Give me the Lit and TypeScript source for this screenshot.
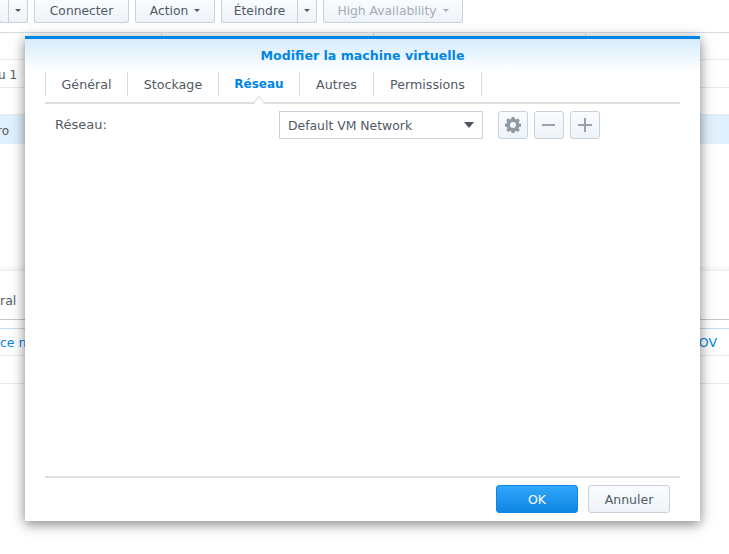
import { LitElement, html, css } from "lit";
import { customElement } from "lit/decorators.js";

const caret = html`<span class="caret"></span>`;

@customElement("app-root")
export class AppRoot extends LitElement {
  static styles = css`
    :host { display: block; position: relative; width: 729px; height: 554px; overflow: hidden; background: #fff;
      font-family: "DejaVu Sans", Verdana, sans-serif; font-size: 12px; color: #505a64; }
    .toolbar { display: flex; height: 24px; align-items: flex-end; gap: 6px; margin-top: -1px; margin-bottom: 9px; }
    .group { display: flex; }
    .tb { box-sizing: border-box; height: 24px; display: flex; align-items: center; justify-content: center; gap: 6px; font-size: 12.3px;
      border: 1px solid #c8d1dc; border-top: none; border-radius: 0 0 3px 3px; background: linear-gradient(#fafcfe, #eef3f8); color: #505a64; }
    .group .tb:first-child { border-radius: 0 0 0 3px; border-right: none; }
    .group .tb:last-child { border-radius: 0 0 3px 0; }
    .caret { width: 0; height: 0; border: 3px solid transparent; border-top: 3px solid #505a64; border-bottom: none; }
    .off { color: #a6adb6; }
    .off .caret { border-top-color: #a6adb6; }
    .lead { margin-left: -1px; }
    .w00 { width: 9px; }
    .w1 { width: 95px; }
    .w2 { width: 80px; }
    .w3 { width: 76px; }
    .w4 { width: 20px; }
    .w5 { width: 140px; }
    .thead { height: 26px; border-top: 1px solid #d5dce5; border-bottom: 1px solid #e6e9ee; display: grid; grid-template-columns: 162px 212px 212px 1fr; }
    .thead span { border-right: 1px solid #d5dce5; }
    .thead span:last-child { border-right: none; }
    .row { box-sizing: border-box; height: 28px; border-bottom: 1px solid #e6e9ee; display: flex; align-items: center; padding-top: 2px; }
    .row span { margin-left: -2px; }
    .row.short { height: 27px; }
    .row.sel { height: 29px; background: #e0f1fd; border-bottom: none; padding-top: 2px; }
    .row.sel span { margin-left: -3px; }
    .spacer { height: 127px; background: linear-gradient(#fff 121px, #f1f1f1); }
    .ltabs { box-sizing: border-box; height: 49px; border-bottom: 1px solid #c6c6c6; padding-top: 20px; line-height: 20px; font-size: 12.5px; }
    .lhead { height: 8px; border-bottom: 1px solid #c9d9e8; }
    .lrow { box-sizing: border-box; height: 27px; border-bottom: 1px solid #e6e9ee; color: #0086e5; font-size: 12.5px; display: flex; align-items: center; justify-content: space-between; padding: 1px 12px 0 0; }
    .lrow.blank { height: 28px; }

    .modal { position: absolute; left: 25px; top: 36px; width: 675px; height: 485px; box-sizing: border-box; background: #fff;
      border-top: 3px solid #0086e5; box-shadow: 0 3px 12px rgba(0, 0, 0, 0.5); display: flex; flex-direction: column; padding: 0 20px 8px 20px; }
    .grad { position: absolute; left: 0; right: 0; top: 0; height: 32px; background: linear-gradient(#d6ebfb, #fff); }
    .title { position: relative; height: 33px; line-height: 33px; text-align: center; font-weight: bold; font-size: 12.6px; color: #0086e5; }
    .tabs { position: relative; display: flex; height: 30px; border-bottom: 2px solid #dfdfdf; }
    .tab { box-sizing: border-box; height: 24px; line-height: 25px; text-align: center; border-right: 1px solid #d7dde4; font-size: 12.65px; }
    .tab:first-child { border-left: 1px solid #d7dde4; }
    .tab.on { color: #0086e5; font-weight: bold; font-size: 12px; }
    .t1 { width: 83px; }
    .t2 { width: 91px; }
    .t3 { width: 81px; }
    .t4 { width: 74px; }
    .t5 { width: 108px; }
    .notch { position: absolute; left: 210px; top: 26px; width: 7px; height: 7px; background: #fff; transform: rotate(45deg); border-left: 1px solid #dfdfdf; border-top: 1px solid #dfdfdf; }
    .form { flex: 1; display: flex; align-items: flex-start; padding-top: 7px; }
    .lbl { width: 234px; padding-left: 10px; box-sizing: border-box; line-height: 28px; font-size: 13px; }
    .select { box-sizing: border-box; width: 204px; height: 28px; border: 1px solid #c8d1dc; display: flex; align-items: center; justify-content: space-between; padding: 0 8px; font-size: 12.4px; }
    .select i { width: 0; height: 0; border-left: 5px solid transparent; border-right: 5px solid transparent; border-top: 6px solid #4d5660; }
    .icons { display: flex; gap: 6px; margin-left: 15px; }
    .ib { box-sizing: border-box; width: 30px; height: 28px; border: 1px solid #c8d1dc; border-radius: 3px; background: linear-gradient(#fafcfe, #eef3f8); display: flex; align-items: center; justify-content: center; }
    .foot { border-top: 2px solid #e0e0e0; height: 37px; box-sizing: border-box; padding: 7px 10px 0 0; display: flex; justify-content: flex-end; gap: 10px; }
    .btn { box-sizing: border-box; width: 82px; height: 28px; border-radius: 3px; border: 1px solid #c8d1dc; background: linear-gradient(#fafcfe, #eef3f8); display: flex; align-items: center; justify-content: center; font-size: 12.5px; }
    .btn.ok { background: linear-gradient(#30a6fb, #0f86e4); border-color: #0f86e4; color: #fff; }
  `;

  render() {
    return html`
      <div class="toolbar">
        <div class="group lead"><div class="tb w00"></div><div class="tb w4">${caret}</div></div>
        <div class="tb w1">Connecter</div>
        <div class="tb w2">Action ${caret}</div>
        <div class="group"><div class="tb w3">Éteindre</div><div class="tb w4">${caret}</div></div>
        <div class="tb w5 off">High Availability ${caret}</div>
      </div>
      <div class="thead"><span></span><span></span><span></span><span></span></div>
      <div class="row"><span>u 1</span></div>
      <div class="row short"></div>
      <div class="row sel"><span>ro</span></div>
      <div class="spacer"></div>
      <div class="ltabs">ral</div>
      <div class="lhead"></div>
      <div class="lrow"><span>ce n</span><span>OV</span></div>
      <div class="lrow blank"></div>

      <div class="modal">
        <div class="grad"></div>
        <div class="title">Modifier la machine virtuelle</div>
        <div class="tabs">
          <div class="tab t1">Général</div>
          <div class="tab t2">Stockage</div>
          <div class="tab on t3">Réseau</div>
          <div class="tab t4">Autres</div>
          <div class="tab t5">Permissions</div>
          <div class="notch"></div>
        </div>
        <div class="form">
          <div class="lbl">Réseau:</div>
          <div class="select"><span>Default VM Network</span><i></i></div>
          <div class="icons">
            <div class="ib">
              <svg width="16" height="16" viewBox="0 0 16 16"><path fill="#8f98a3" fill-rule="evenodd" d="M6.600 0h2.800l.4 2.100 1.200.5L12.800 1.400l2 2-1.200 1.800.5 1.200 2.100.4v2.800l-2.100.4-.5 1.200 1.200 1.800-2 2-1.800-1.200-1.200.5-.4 2.100H6.600l-.4-2.100-1.200-.5-1.800 1.200-2-2 1.200-1.800-.5-1.200L-.2 9.400V6.600l2.100-.4.500-1.200L1.200 3.200l2-2L5 2.600l1.200-.5zM8 5a3 3 0 1 0 0 6 3 3 0 0 0 0-6z"/></svg>
            </div>
            <div class="ib"><svg width="14" height="14" viewBox="0 0 14 14"><rect x="0" y="6" width="13" height="2" fill="#98a1ac"/></svg></div>
            <div class="ib"><svg width="14" height="14" viewBox="0 0 14 14"><path d="M0 6h6V0h2v6h6v2H8v6H6V8H0z" fill="#98a1ac"/></svg></div>
          </div>
        </div>
        <div class="foot">
          <div class="btn ok">OK</div>
          <div class="btn">Annuler</div>
        </div>
      </div>
    `;
  }
}
